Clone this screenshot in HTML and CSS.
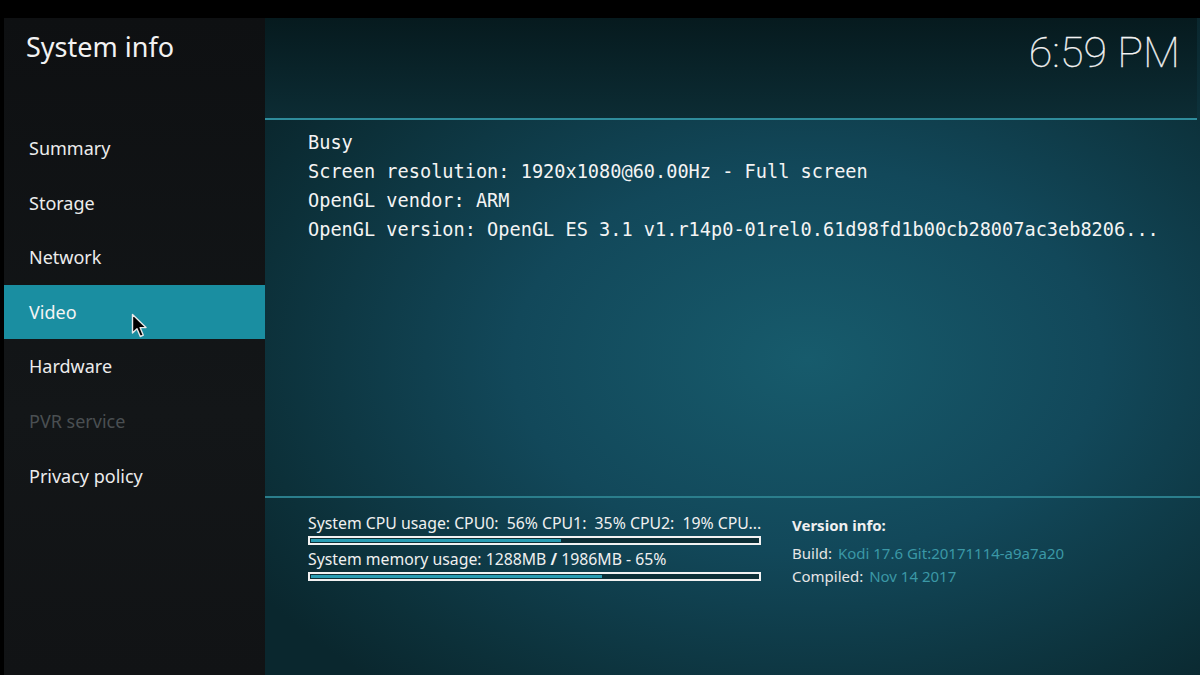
FILE: index.html
```html
<!DOCTYPE html>
<html lang="en">
<head>
    <meta charset="UTF-8" />
    <title>System info</title>
    <link rel="stylesheet" href="styles.css">
</head>
<body>
    <div class="screen">
        <div class="sidebar">
            <h1 class="side-title">System info</h1>
            <ul class="menu">
                <li class="menu-item">Summary</li>
                <li class="menu-item">Storage</li>
                <li class="menu-item">Network</li>
                <li class="menu-item is-active">Video</li>
                <li class="menu-item">Hardware</li>
                <li class="menu-item is-disabled">PVR service</li>
                <li class="menu-item">Privacy policy</li>
            </ul>
        </div>
        <div class="main">
            <div class="top-bar">
                <div class="clock">6:59 PM</div>
            </div>
            <div class="info-panel">
                <p class="info-line">Busy</p>
                <p class="info-line">Screen resolution: 1920x1080@60.00Hz - Full screen</p>
                <p class="info-line">OpenGL vendor: ARM</p>
                <p class="info-line">OpenGL version: OpenGL ES 3.1 v1.r14p0-01rel0.61d98fd1b00cb28007ac3eb8206...</p>
            </div>
            <div class="bottom-panel">
                <div class="usage">
                    <div class="usage-label">System CPU usage: CPU0:&nbsp; 56% CPU1:&nbsp; 35% CPU2:&nbsp; 19% CPU...</div>
                    <div class="bar"><div class="bar-fill" style="width:56%"></div></div>
                    <div class="usage-label">System memory usage: 1288MB <b>/</b> 1986MB - 65%</div>
                    <div class="bar"><div class="bar-fill" style="width:65%"></div></div>
                </div>
                <div class="version">
                    <div class="version-title">Version info:</div>
                    <div class="version-row">Build: <span class="val">Kodi 17.6 Git:20171114-a9a7a20</span></div>
                    <div class="version-row">Compiled: <span class="val">Nov 14 2017</span></div>
                </div>
            </div>
        </div>
        <svg class="cursor" width="18" height="26" viewBox="0 0 18 26">
            <path d="M1.5 1.5 L1.5 20 L6 15.8 L9.3 23.5 L12.3 22.2 L9.1 14.6 L15 14.6 Z" fill="#000" stroke="#e8e8e8" stroke-width="1.4" stroke-linejoin="round"/>
        </svg>
    </div>
</body>
</html>
```

FILE: styles.css
```css
html,
body {
    margin: 0;
    padding: 0;
    background-color: #000;
}
.screen {
    position: relative;
    width: 1200px;
    height: 675px;
    padding-top: 18px;
    box-sizing: border-box;
    display: flex;
    background-color: #000;
    font-family: "Noto Sans", "Open Sans", sans-serif;
    color: #f0f0f0;
    overflow: hidden;
}

/* sidebar */
.sidebar {
    width: 261px;
    margin-left: 4px;
    background: linear-gradient(180deg, #0e1012 0%, #131618 60%, #111315 100%);
}
.side-title {
    height: 102px;
    margin: 0;
    padding: 10px 0 0 22px;
    box-sizing: border-box;
    font-size: 27px;
    font-weight: 400;
    color: #f2f2f2;
}
.menu {
    list-style: none;
    margin: 1px 0 0;
    padding: 0;
}
.menu-item {
    height: 54.6px;
    line-height: 54.6px;
    padding-left: 25px;
    font-size: 18px;
    color: #ececec;
}
.menu-item.is-active {
    background-color: #1a8ea1;
    color: #f4f4f4;
}
.menu-item.is-disabled {
    color: #4a4f52;
}

/* main */
.main {
    flex: 1;
    display: flex;
    flex-direction: column;
    background: radial-gradient(ellipse 70% 65% at 58% 52%, #175b6c 0%, #12485a 45%, #0c3039 85%, #0a272e 100%);
}
.top-bar {
    height: 102px;
    border-bottom: 2px solid #2f8c9c;
    box-sizing: border-box;
    margin-right: 3px;
    display: flex;
    justify-content: flex-end;
    background: linear-gradient(180deg, #061a1e 0%, #0c2c34 100%);
}
.clock {
    font-family: "Roboto", "Lato", sans-serif;
    font-weight: 100;
    font-size: 43px;
    line-height: 1;
    color: #f4f4f4;
    padding: 13px 17px 0 0;
    -webkit-text-stroke: 0.3px #f4f4f4;
}
.info-panel {
    height: 378px;
    padding: 8px 0 0 43px;
    box-sizing: border-box;
    border-bottom: 2px solid #2b7e8c;
}
.info-line {
    margin: 0;
    font-family: "DejaVu Sans Mono", "Liberation Mono", monospace;
    font-size: 18.6px;
    line-height: 29px;
    color: #f4f4f4;
    white-space: nowrap;
}

/* bottom */
.bottom-panel {
    flex: 1;
    display: flex;
    padding: 13px 0 0 43px;
}
.usage {
    width: 453px;
}
.usage-label {
    font-size: 15.8px;
    line-height: 24px;
    color: #f0f0f0;
    white-space: nowrap;
}
.usage-label b {
    font-weight: 700;
}
.bar {
    height: 9px;
    border: 2px solid #f2f2f2;
    box-sizing: border-box;
    background-color: #0d2f37;
    margin: 1px 0 2px;
    padding: 1px;
}
.bar-fill {
    height: 100%;
    background-color: #2a9db3;
}
.version {
    margin-left: 31px;
    padding-top: 2px;
}
.version-title {
    font-size: 15px;
    font-weight: 700;
    line-height: 24px;
    margin-bottom: 5px;
}
.version-row {
    font-size: 15px;
    line-height: 23px;
    color: #e6e6e6;
}
.version-row .val {
    color: #3b98a6;
    margin-left: 2px;
}
.cursor {
    position: absolute;
    left: 131px;
    top: 313px;
}
```
